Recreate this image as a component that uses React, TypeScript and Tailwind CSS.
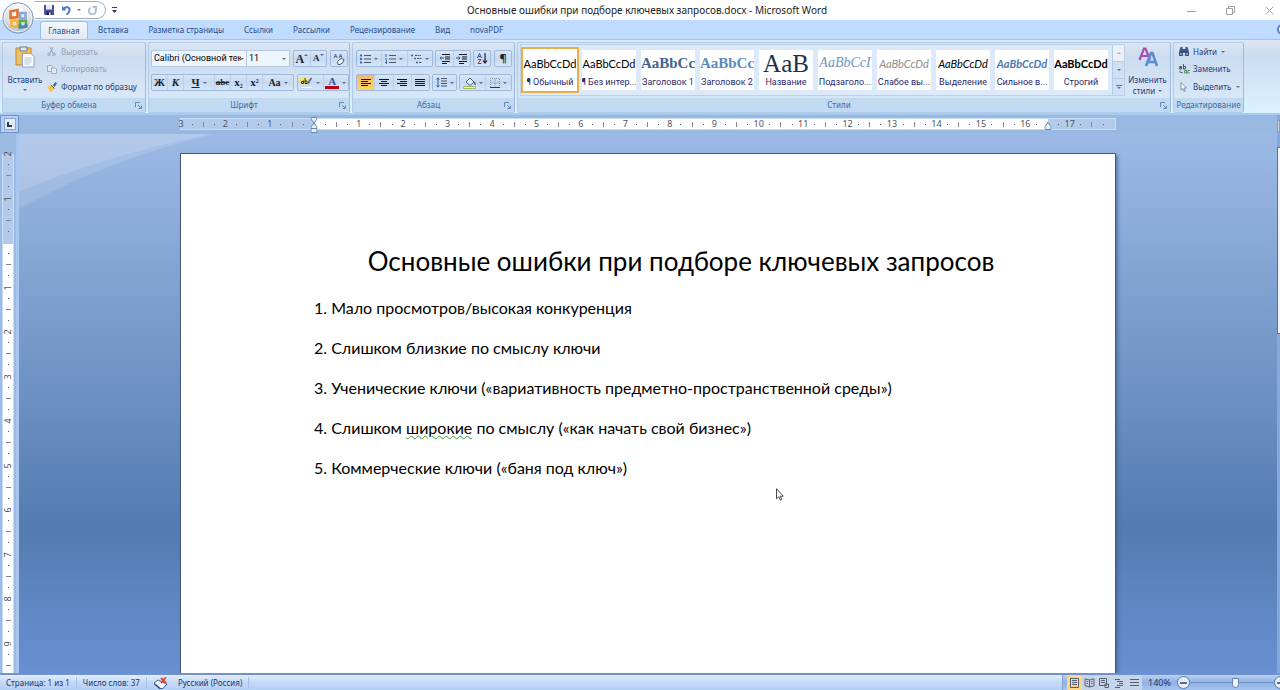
import type { ReactNode } from "react";
import clsx from "clsx";

const tabs = ["Вставка", "Разметка страницы", "Ссылки", "Рассылки", "Рецензирование", "Вид", "novaPDF"];

const styleTiles = [
    { sample: "AaBbCcDd", name: "¶ Обычный", look: "font-['Lato',sans-serif] text-[11px] text-black" },
    { sample: "AaBbCcDd", name: "¶ Без интер...", look: "font-['Lato',sans-serif] text-[11px] text-black" },
    { sample: "AaBbCc", name: "Заголовок 1", look: "font-['Liberation_Serif',serif] text-[15px] font-bold text-[#41648f]" },
    { sample: "AaBbCc", name: "Заголовок 2", look: "font-['Liberation_Serif',serif] text-[15px] font-bold text-[#5b8ac4]" },
    { sample: "AaB", name: "Название", look: "font-['Liberation_Serif',serif] text-[25px] text-[#1d3050]" },
    { sample: "AaBbCcI", name: "Подзаголо...", look: "font-['Liberation_Serif',serif] text-[14px] italic text-[#6d95c6]" },
    { sample: "AaBbCcDd", name: "Слабое вы...", look: "font-['Lato',sans-serif] text-[11px] italic text-[#8c8c8c]" },
    { sample: "AaBbCcDd", name: "Выделение", look: "font-['Lato',sans-serif] text-[11px] italic text-black" },
    { sample: "AaBbCcDd", name: "Сильное в...", look: "font-['Lato',sans-serif] text-[11px] font-bold italic text-[#4a78b5]" },
    { sample: "AaBbCcDd", name: "Строгий", look: "font-['Lato',sans-serif] text-[11px] font-bold text-black" },
];

const Caret = ({ className }: { className?: string }) => (
    <svg viewBox="0 0 4 2" className={clsx("h-[2px] w-1 shrink-0 fill-[#5a6f96]", className)}>
        <path d="M0 0h4L2 2z" />
    </svg>
);

const Group = ({ label, launcher, className, children }: { label: string; launcher?: boolean; className?: string; children: ReactNode }) => (
    <section className={clsx("flex flex-col rounded-[2px] border border-[#b3cbe8] border-r-[#9dbbe0] bg-linear-to-b from-[#dde7f3] via-[#cbdcf0] via-20% to-[#dcebfa]", className)}>
        <div className="flex min-h-0 flex-1">{children}</div>
        <div className="flex h-[14px] items-center bg-[#c1d9f1] text-[#3e6aaa]">
            <h2 className="flex-1 text-center">{label}</h2>
            {launcher && (
                <button aria-label={label} className="mr-[3px]">
                    <svg viewBox="0 0 7 7" className="size-[7px] fill-none stroke-[#6688b5]">
                        <path d="M.5 5V.5H5M3 3l3 3M6.5 3.500v3h-3" />
                    </svg>
                </button>
            )}
        </div>
    </section>
);

const Cluster = ({ children, className }: { children: ReactNode; className?: string }) => (
    <div className={clsx("flex h-[17px] items-stretch divide-x divide-[#b9cfea] rounded-[2px] border border-[#9db9dd] bg-linear-to-b from-[#d8e5f5] via-[#c6d9f0] to-[#d6e6f8]", className)}>
        {children}
    </div>
);

const Tool = ({ label, caret, active, className, children }: { label: string; caret?: boolean; active?: boolean; className?: string; children: ReactNode }) => (
    <button
        aria-label={label}
        className={clsx("flex flex-1 items-center justify-center gap-[3px] text-[#1b2433]", active && "bg-linear-to-b from-[#f9b56a] to-[#fdd65f]", className)}
    >
        {children}
        {caret && <Caret />}
    </button>
);

const Lines = ({ align }: { align: "left" | "center" | "right" | "full" }) => {
    const short = { left: "M0 3.500h7M0 7.500h7", center: "M2 3.500h6M2 7.500h6", right: "M3 3.500h7M3 7.500h7", full: "M0 3.500h10M0 7.500h10" }[align];
    return (
        <svg viewBox="0 0 10 9" className="h-[9px] w-[10px] fill-none stroke-[#10151d]">
            <path d={"M0 1.500h10M0 5.500h10" + short} />
        </svg>
    );
};

const ListIcon = ({ kind }: { kind: "bullets" | "numbers" | "levels" }) => (
    <svg viewBox="0 0 11 10" className="h-[10px] w-[11px] fill-none">
        {kind === "levels" ? (
            <>
                <path d="M0 1.500h2M3 4.500h2M5 8.500h2" stroke="#3c66a8" strokeWidth="1.500" />
                <path d="M4 1.500h6M6 4.500h5M8 8.500h3" stroke="#4a5568" strokeDasharray="2 .6" />
            </>
        ) : (
            <>
                <path d={kind === "bullets" ? "M0 1.500h2M0 5h2M0 8.500h2" : "M1 0v3M0 5h2M0 8.500h2M1.500 6v4"} stroke="#3c66a8" strokeWidth={kind === "bullets" ? 2 : 1} />
                <path d="M4 1.500h7M4 5h7M4 8.500h7" stroke="#4a5568" />
            </>
        )}
    </svg>
);

const IndentIcon = ({ flip }: { flip?: boolean }) => (
    <svg viewBox="0 0 11 10" className="h-[10px] w-[11px] fill-none stroke-[#10151d]">
        <path d="M3 .5h8M6 3h5M6 5h5M3 7.500h8M3 9.500h5" />
        <path d={flip ? "M0 4h4M2.500 2.500L4 4 2.500 5.500" : "M1 4h4M2.500 2.500L1 4l1.500 1.500"} stroke="#2d5aa8" />
    </svg>
);

const OfficeButton = () => (
    <button aria-label="Office" className="absolute top-[2px] left-[2px] z-10 size-8 rounded-full">
        <svg viewBox="0 0 32 32" className="size-8">
            <defs>
                <radialGradient id="orb" cx=".5" cy=".3" r=".7">
                    <stop offset="0" stopColor="#fff" />
                    <stop offset=".6" stopColor="#dfe3ea" />
                    <stop offset="1" stopColor="#aab6c8" />
                </radialGradient>
            </defs>
            <circle cx="16" cy="16" r="15.200" fill="url(#orb)" stroke="#8a9ab4" />
            <circle cx="16" cy="16" r="13.800" fill="none" stroke="#fff" strokeOpacity=".8" />
            <g fill="none" strokeWidth="2.600">
                <path d="M8.500 9.500l7-1.500v7l-7 1z" stroke="#e5702a" />
                <path d="M18 11h5.500v5.500H18z" stroke="#86a9d6" />
                <path d="M9.500 18.500h6V25l-6-1z" stroke="#f2b42c" />
                <path d="M18 19h6v5.500l-6 .8z" stroke="#6aa84a" />
                <path d="M18 22v3.300l6-.8V22" stroke="#3f86b8" />
            </g>
        </svg>
    </button>
);

const TitleBar = () => (
    <header className="flex h-5 items-center bg-white">
        <div className="flex flex-1 items-center">
            <div className="ml-[34px] flex h-[18px] w-[72px] items-center gap-[7px] rounded-r-full border border-[#a3a9b5] border-l-white pl-[9px]">
                <button aria-label="Сохранить">
                    <svg viewBox="0 0 10 10" className="size-[10px]">
                        <path d="M0 0h10v10H1L0 9z" fill="#4a4fa8" />
                        <path d="M2 0h6v4.500H2z" fill="#e8ecf8" />
                        <path d="M2.500 6.500h5V10h-5z" fill="#20244f" />
                        <path d="M5 7.200h1.500V10H5z" fill="#fff" />
                    </svg>
                </button>
                <button aria-label="Отменить" className="flex items-center gap-[6px]">
                    <svg viewBox="0 0 10 10" className="size-[10px] fill-none stroke-[#4a78cc]" strokeWidth="2">
                        <path d="M2 4c3-3 7-2 6.500 1.500C8.300 7.500 7 8.500 5.500 9.500" />
                        <path d="M1 1v4.500h4.500z" fill="#4a78cc" stroke="none" />
                    </svg>
                    <Caret />
                </button>
                <button aria-label="Повторить">
                    <svg viewBox="0 0 10 10" className="size-[9px] fill-none stroke-[#a7b8d4]" strokeWidth="1.800">
                        <path d="M3 1.800A4 4 0 1 0 8 3M5 1h4v3.500" />
                    </svg>
                </button>
            </div>
            <button aria-label="Настройка панели" className="ml-[6px]">
                <svg viewBox="0 0 5 6" className="h-[6px] w-[5px] fill-[#2e3d66]">
                    <path d="M0 0h5v1H0zM0 3h5L2.500 6z" />
                </svg>
            </button>
        </div>
        <h1 className="pl-5 text-[10px] text-[#222]">Основные ошибки при подборе ключевых запросов.docx - Microsoft Word</h1>
        <div className="flex flex-1 items-center justify-end gap-[30px] pr-[6px]">
            {[
                ["Свернуть", "M0 5.500h9"],
                ["Развернуть", "M.5 2.500h6v6h-6zM2.500 2V.5h6v6H7"],
                ["Закрыть", "M.5.500l8 8M8.500.500l-8 8"],
            ].map(([label, d]) => (
                <button key={label} aria-label={label}>
                    <svg viewBox="0 0 9 9" className="size-[9px] fill-none stroke-[#a0a0a0]">
                        <path d={d} />
                    </svg>
                </button>
            ))}
        </div>
    </header>
);

const TabBar = () => (
    <nav className="flex h-5 items-end overflow-hidden border-b border-[#a3c3ea] bg-[#bfdbff] pl-10 text-[#2b4c86]">
        <a href="#home" className="flex h-[18px] w-12 items-center justify-center rounded-t-[3px] border border-b-0 border-[#9dbfe8] bg-linear-to-b from-[#f4f8fd] to-[#dfe9f5]">Главная</a>
        {tabs.map((tab) => (
            <a key={tab} href={"#" + tab} className="flex h-[18px] items-center px-[10px] whitespace-nowrap">{tab}</a>
        ))}
        <button aria-label="Справка" className="-mr-[8px] mb-[4px] ml-auto size-[11px] shrink-0 rounded-full border-2 border-[#5b83c4] bg-white" />
    </nav>
);

const ClipboardGroup = () => (
    <Group label="Буфер обмена" launcher className="w-36">
        <button className="flex w-11 flex-col items-center pt-[3px] text-[#23407a]">
            <svg viewBox="0 0 20 22" className="h-[22px] w-5">
                <path d="M1 2h15v17H1z" fill="#ecc063" stroke="#b98a35" />
                <path d="M5 1h7v4H5z" fill="#dfe3ea" stroke="#6f7d92" />
                <path d="M7.500 7.500H16l3 3V21H7.500z" fill="#fdfdff" stroke="#8fa0bf" />
                <path d="M9.500 12h7M9.500 14h7M9.500 16h7M9.500 18h5" stroke="#9fb2d4" strokeWidth=".8" />
            </svg>
            <span className="mt-[6px] leading-3">Вставить</span>
            <Caret className="mt-[3px]" />
        </button>
        <div className="flex flex-1 flex-col text-[#23407a]">
            <button className="flex h-[17px] items-center gap-[5px] text-[#93a0b4]">
                <svg viewBox="0 0 9 9" className="size-[9px] fill-none stroke-[#94a2b8]">
                    <path d="M3 0l3 6M6 0L3 6" />
                    <circle cx="2" cy="7.300" r="1.200" />
                    <circle cx="7" cy="7.300" r="1.200" />
                </svg>
                Вырезать
            </button>
            <button className="flex h-[18px] items-center gap-[4px] text-[#93a0b4]">
                <svg viewBox="0 0 10 9" className="h-[9px] w-[10px] fill-[#e2e9f3] stroke-[#9aabc4]">
                    <path d="M.5.500h4l1 1v5h-5z" />
                    <path d="M4.500 3h4l1 1v4.500h-5z" />
                </svg>
                Копировать
            </button>
            <button className="flex h-[17px] items-center gap-[4px] whitespace-nowrap">
                <svg viewBox="0 0 10 10" className="size-[10px]">
                    <path d="M6 3l2.500-3L10 1.500 7.500 5z" fill="#4a5f96" />
                    <path d="M0 5l4-2 3.500 3.500L4 10z" fill="#f3c54a" />
                    <path d="M4 3l3.500 3.500" stroke="#7a5a20" />
                </svg>
                Формат по образцу
            </button>
        </div>
    </Group>
);

const FontGroup = () => (
    <Group label="Шрифт" launcher className="w-[202px]">
        <div className="flex flex-1 flex-col gap-[7px] px-[2px] pt-[7px]">
            <div className="flex h-[17px] items-stretch font-['Roboto',sans-serif] text-[9px]">
                <label className="relative flex w-24 items-center border border-[#b3c9e6] bg-[#eff5fd]">
                    <select aria-label="Шрифт" className="w-[89px] appearance-none overflow-hidden pl-[2px] text-black">
                        <option>Calibri (Основной тек</option>
                    </select>
                    <Caret className="absolute right-[2px]" />
                </label>
                <label className="relative flex w-[43px] items-center border border-l-0 border-[#b3c9e6] bg-[#eff5fd]">
                    <select aria-label="Размер" className="w-8 appearance-none pl-[2px] text-black">
                        <option>11</option>
                    </select>
                    <Caret className="absolute right-[3px]" />
                </label>
                <Cluster className="ml-[3px] w-[34px] font-['Liberation_Serif',serif] font-bold">
                    <Tool label="Увеличить размер"><span className="text-[12px] leading-none">A</span><Caret className="mb-[8px] -ml-[3px] rotate-180" /></Tool>
                    <Tool label="Уменьшить размер"><span className="text-[9px] leading-none">A</span><Caret className="mb-[8px] -ml-[3px]" /></Tool>
                </Cluster>
                <Cluster className="ml-[3px] w-[18px]">
                    <Tool label="Очистить формат">
                        <svg viewBox="0 0 12 12" className="size-3 fill-none stroke-[#44597f]">
                            <path d="M1 5l1.500-4L4 5M1.500 3.500h2M6 5l1.500-4L9 5M6.500 3.500h2" strokeWidth=".8" />
                            <path d="M4.500 8.500L8 5.500l3 1-1 3L7 11.500H5z" fill="#fff" />
                        </svg>
                    </Tool>
                </Cluster>
            </div>
            <div className="flex">
                <Cluster className="w-[143px] font-['Liberation_Serif',serif] text-[11px] font-bold">
                    <Tool label="Полужирный">Ж</Tool>
                    <Tool label="Курсив" className="italic">К</Tool>
                    <Tool label="Подчеркнутый" caret className="flex-2"><span className="underline">Ч</span></Tool>
                    <Tool label="Зачеркнутый"><span className="text-[9px] line-through">abc</span></Tool>
                    <Tool label="Подстрочный"><span>x<sub className="text-[6px]">2</sub></span></Tool>
                    <Tool label="Надстрочный"><span>x<sup className="text-[6px]">2</sup></span></Tool>
                    <Tool label="Регистр" caret className="flex-2"><span className="text-[10px]">Aa</span></Tool>
                </Cluster>
                <Cluster className="ml-[3px] w-[52px]">
                    <Tool label="Цвет выделения" caret>
                        <svg viewBox="0 0 13 12" className="h-3 w-[13px]">
                            <path d="M0 1h8v6H0z" fill="#f4ec5e" />
                            <path d="M3.500 3.500v3h-2v-2h2M5 1v5.500h2V4H5" fill="none" stroke="#222" strokeWidth=".9" />
                            <path d="M11.500 1L7.500 7" stroke="#667" strokeWidth="1.600" />
                            <path d="M.5 9.500h12v2H.5z" fill="#fff" stroke="#b8c4d8" strokeWidth=".5" />
                        </svg>
                    </Tool>
                    <Tool label="Цвет текста" caret>
                        <span className="border-b-[3px] border-[#c00012] px-[3px] font-['Liberation_Serif',serif] text-[11px] leading-[9px] font-bold text-[#2f5597]">A</span>
                    </Tool>
                </Cluster>
            </div>
        </div>
    </Group>
);

const ParagraphGroup = () => (
    <Group label="Абзац" launcher className="w-[163px]">
        <div className="flex flex-1 flex-col gap-[7px] px-[3px] pt-[7px]">
            <div className="flex">
                <Cluster className="w-[77px]">
                    <Tool label="Маркеры" caret><ListIcon kind="bullets" /></Tool>
                    <Tool label="Нумерация" caret><ListIcon kind="numbers" /></Tool>
                    <Tool label="Многоуровневый список" caret><ListIcon kind="levels" /></Tool>
                </Cluster>
                <Cluster className="ml-[2px] w-9">
                    <Tool label="Уменьшить отступ"><IndentIcon /></Tool>
                    <Tool label="Увеличить отступ"><IndentIcon flip /></Tool>
                </Cluster>
                <Cluster className="ml-[2px] w-[18px]">
                    <Tool label="Сортировка">
                        <svg viewBox="0 0 11 11" className="size-[11px] fill-none">
                            <path d="M.5 5l2-4.500L4.500 5M1.200 3.500h2.600" stroke="#2d5aa8" />
                            <path d="M1 6.500h3L1 10.500h3.500" stroke="#a33a3a" />
                            <path d="M8 0v10M6 7.500L8 10l2-2.500" stroke="#222" strokeWidth="1.200" />
                        </svg>
                    </Tool>
                </Cluster>
                <Cluster className="ml-[3px] w-[18px]">
                    <Tool label="Отобразить все знаки"><span className="text-[11px] font-bold">¶</span></Tool>
                </Cluster>
            </div>
            <div className="flex">
                <Cluster className="w-[74px]">
                    <Tool label="По левому краю" active><Lines align="left" /></Tool>
                    <Tool label="По центру"><Lines align="center" /></Tool>
                    <Tool label="По правому краю"><Lines align="right" /></Tool>
                    <Tool label="По ширине"><Lines align="full" /></Tool>
                </Cluster>
                <Cluster className="ml-[2px] w-[25px]">
                    <Tool label="Интервал" caret>
                        <svg viewBox="0 0 11 11" className="size-[11px] fill-none">
                            <path d="M2 1v9M.5 2.500L2 .8l1.500 1.700M.5 8.500L2 10.200l1.500-1.700" stroke="#2d5aa8" />
                            <path d="M5 1.500h6M5 4h6M5 6.500h6M5 9h6" stroke="#4a5568" />
                        </svg>
                    </Tool>
                </Cluster>
                <Cluster className="ml-[2px] w-[53px]">
                    <Tool label="Заливка" caret>
                        <svg viewBox="0 0 13 12" className="h-3 w-[13px]">
                            <path d="M3 5l4-4 4 4-4 3.500z" fill="#e7edf6" stroke="#48618f" />
                            <path d="M10.500 5c2 1 1.500 3 1.500 3" fill="none" stroke="#3c66a8" strokeWidth="1.400" />
                            <path d="M.5 9.500h12v2H.5z" fill="#fffbe0" stroke="#8fb040" strokeWidth=".8" />
                        </svg>
                    </Tool>
                    <Tool label="Границы" caret>
                        <svg viewBox="0 0 10 10" className="size-[10px] fill-none stroke-[#7f90ad]">
                            <path d="M.5 9V.500h9V9M5 .5V9M.5 5h9" strokeDasharray="1 1" />
                            <path d="M0 9.500h10" stroke="#2a3550" />
                        </svg>
                    </Tool>
                </Cluster>
            </div>
        </div>
    </Group>
);

const StylesGroup = () => (
    <Group label="Стили" launcher className="min-w-0 flex-1">
        <div className="mt-px ml-[2px] flex h-[52px] min-w-0 flex-1 border border-[#bcd0ea] bg-[#dce9f9]">
            <div className="flex min-w-0 flex-1 items-center gap-[5px] overflow-hidden">
                {styleTiles.map((tile, i) => (
                    <button
                        key={tile.name}
                        className={clsx(
                            "flex min-w-0 flex-1 flex-col items-center overflow-hidden bg-white",
                            i === 0 ? "-mr-[2px] h-[46px] border-2 border-[#e9b04a] py-[1px]" : "h-10"
                        )}
                    >
                        <span className={clsx("flex h-[26px] w-full items-center justify-center overflow-hidden leading-none whitespace-nowrap", tile.look)}>{tile.sample}</span>
                        <span className="h-3 font-['Roboto',sans-serif] text-[9px] leading-3 whitespace-nowrap text-[#2a2a6a]">{tile.name}</span>
                    </button>
                ))}
            </div>
            <div className="ml-[4px] flex w-3 flex-col divide-y divide-[#b4cbe8] border-l border-[#b4cbe8] bg-[#cfe0f5]">
                <button aria-label="Вверх" className="flex flex-1 items-center justify-center bg-[#ecf0f5]"><Caret className="rotate-180 opacity-50" /></button>
                <button aria-label="Вниз" className="flex flex-1 items-center justify-center"><Caret /></button>
                <button aria-label="Все стили" className="flex flex-1 flex-col items-center justify-center gap-[1px]"><span className="h-px w-[6px] bg-[#5a6f96]" /><Caret /></button>
            </div>
        </div>
        <button className="flex w-[45px] flex-col items-center pt-[4px] text-[#23407a]">
            <svg viewBox="0 0 20 20" className="size-5 fill-none">
                <path d="M1.500 13L6 1.500h1.500L12 13M3.500 9h6" stroke="#a94fb0" strokeWidth="2.200" />
                <path d="M8 19l5-13h1.500L19 19M10 15h7" stroke="#5b8bd2" strokeWidth="2.600" />
            </svg>
            <span className="mt-[7px] leading-[11px]">Изменить</span>
            <span className="flex items-center gap-[3px] leading-[11px]">стили <Caret /></span>
        </button>
    </Group>
);

const EditingGroup = () => (
    <Group label="Редактирование" className="w-[71px] whitespace-nowrap">
        <div className="flex flex-1 flex-col pl-[5px] text-[#23407a]">
            <button className="flex h-[17px] items-center gap-[4px]">
                <svg viewBox="0 0 10 9" className="h-[9px] w-[10px] fill-[#3d5484]">
                    <path d="M1.500 0h2v2h3V0h2l1.500 5v4H6V6H4v3H0V5z" />
                    <path d="M1.500 6h1v2h-1zM7.500 6h1v2h-1z" fill="#dbe6f5" />
                </svg>
                Найти <Caret />
            </button>
            <button className="flex h-[18px] items-center gap-[3px]">
                <svg viewBox="0 0 11 10" className="h-[10px] w-[11px] fill-none">
                    <path d="M.5 2.500h2V5h-2V3.500h2M4.500 0v5h2V2.500h-2" stroke="#3d5484" />
                    <path d="M1 6.500v2h3" stroke="#6a7a98" />
                    <path d="M7.500 6.500h-2V9h2V6.500V9.500M10.800 6.500h-2V9h2" stroke="#5b8f5a" />
                </svg>
                Заменить
            </button>
            <button className="flex h-[17px] items-center gap-[5px]">
                <svg viewBox="0 0 9 10" className="h-[10px] w-[9px] fill-white stroke-[#6d7c96]" strokeWidth=".8">
                    <path d="M2 .5v7.500l1.800-1.500L5 9.500l1.200-.5L5 6h2.500z" />
                </svg>
                Выделить <Caret />
            </button>
        </div>
    </Group>
);

// One mark for every quarter of a centimetre, spread from edge to edge.
const RulerMarks = ({ origin, count, vertical }: { origin: number; count: number; vertical?: boolean }) => (
    <>
        {Array.from({ length: count * 4 + 1 }, (_, i) => {
            const cm = Math.abs(i / 4 - origin);
            return (
                <span key={i} className={clsx("flex items-center justify-center", vertical ? "h-0 -rotate-90" : "w-0", i === count * 4 && "invisible")}>
                    {i % 4 === 0 ? cm || "" : i % 4 === 2 ? <i className="h-[5px] w-px shrink-0 bg-[#7d8694]" /> : <i className="size-px shrink-0 bg-[#4f5866]" />}
                </span>
            );
        })}
    </>
);

const Ruler = () => (
    <div className="flex h-[19px] bg-[#9ab9e2]">
        <button aria-label="Табуляция" className="flex h-[18px] w-[19px] items-center justify-center border border-[#7292cc] bg-[#b5cdef]">
            <span className="flex size-3 items-center justify-center border border-[#8aa6d4] bg-[#e3ecf9]">
                <i className="size-[5px] border-b-2 border-l-2 border-[#2d3950]" />
            </span>
        </button>
        <div className="flex min-w-0 flex-1 justify-center">
            <div className="relative mt-[3px] flex h-3 w-full max-w-[936px] items-center justify-between border border-[#c9dcf4] bg-[linear-gradient(to_right,#b3cbeb_14.3%,#fff_14.3%,#fff_92.8%,#b3cbeb_92.8%)] text-[9px] text-[#4e5560]">
                <RulerMarks origin={3} count={21} />
                <svg viewBox="0 0 7 16" className="absolute -top-[2px] left-[14.2%] h-4 w-[7px] -translate-x-1/2 fill-[#e6eefa] stroke-[#6c86b4]">
                    <path d="M.5.500h6v1.500l-3 4-3-4zM3.500 6l3 4v1.500h-6V10zM.5 11.500h6v4h-6z" />
                </svg>
                <svg viewBox="0 0 7 8" className="absolute top-[3px] left-[92.8%] h-2 w-[7px] -translate-x-1/2 fill-[#e6eefa] stroke-[#6c86b4]">
                    <path d="M3.500.500l3 4v3h-6v-3z" />
                </svg>
            </div>
        </div>
    </div>
);

const Document = () => (
    <div className="flex min-h-0 flex-1">
        <div className="flex w-[19px] flex-col items-center overflow-hidden border-r-[3px] border-[#a9c6ee] bg-[#9cbbe4] pt-5">
            <div className="flex h-[534px] w-3 shrink-0 flex-col items-stretch justify-between border-x border-[#c9dcf4] bg-[linear-gradient(#b3cbeb_16.9%,#fff_16.9%)] text-[9px] text-[#4e5560]">
                <RulerMarks origin={2} count={12} vertical />
            </div>
        </div>
        <main className="relative min-w-0 flex-1 overflow-hidden bg-linear-to-b from-[#9dbae6] via-[#547cb0] via-73% to-[#6890d2] pt-[19px] font-['Lato','Noto_Sans',sans-serif] text-[16px] leading-5 text-black">
            <svg viewBox="0 0 200 76" className="absolute top-0 left-0 h-[76px] w-[200px]">
                <path d="M0 0h196C120 18 60 42 0 75z" fill="#fff" fillOpacity=".12" />
                <path d="M0 0h190C120 16 60 32 0 58z" fill="#fff" fillOpacity=".13" />
            </svg>
            <article className="relative mx-auto h-full w-full max-w-[936px] border border-b-0 border-[#46597a] bg-white pt-[91px] pr-[67px] pl-[133px] shadow-[2px_2px_3px_#3f5f8fb0]">
                <h2 className="mb-[21px] text-center text-[26px] leading-8">Основные ошибки при подборе ключевых запросов</h2>
                <ol className="flex flex-col gap-5">
                    <li>1. Мало просмотров/высокая конкуренция</li>
                    <li>2. Слишком близкие по смыслу ключи</li>
                    <li>3. Ученические ключи («вариативность предметно-пространственной среды»)</li>
                    <li>4. Слишком <span className="underline decoration-[#3f9b3f] decoration-wavy decoration-1 underline-offset-1">широкие</span> по смыслу («как начать свой бизнес»)</li>
                    <li>5. Коммерческие ключи («баня под ключ»)</li>
                </ol>
                <svg viewBox="0 0 8 13" className="absolute top-[334px] left-[595px] h-[13px] w-2 fill-white stroke-[#333]" strokeWidth=".9">
                    <path d="M.5.700v10l2.300-2 1.500 3.500 1.500-.7-1.500-3.300h3z" />
                </svg>
            </article>
        </main>
    </div>
);

const viewIcons = [
    ["Разметка страницы", "M1.500.500h8v9h-8zM3 2.500h5M3 4.500h5M3 6.500h5"],
    ["Режим чтения", "M5.500 2v7M5.500 2L1 .8v7L5.500 9 10 7.800v-7zM2.500 3.500h1.500M2.500 5.500h1.500M7 3.500h1.500M7 5.500h1.500"],
    ["Веб-документ", "M.5.500h7v7h-7zM2 2.500h4M2 4.500h4M6 6h3.500v3.500H6z"],
    ["Структура", "M1 1.500h5M3 3.500h6M5 5.500h4M3 7.500h6M1 9.500h5"],
    ["Черновик", "M1 1.500h9M1 4.500h9M1 7.500h9"],
];

const StatusBar = () => (
    <footer className="flex h-[17px] items-center overflow-hidden border-t-2 border-t-[#6d92cc] bg-linear-to-b from-[#e2edfc] via-[#c3d9f8] to-[#b4cff5] whitespace-nowrap text-[#1f3566]">
        <span className="border-r border-[#a4c0e8] px-[6px]">Страница: 1 из 1</span>
        <span className="border-r border-[#a4c0e8] px-[6px]">Число слов: 37</span>
        <button aria-label="Правописание" className="mr-1 ml-[7px]">
            <svg viewBox="0 0 14 12" className="h-3 w-[14px]">
                <path d="M0 6l4-3 9 4-4 4.500H6z" fill="#f4f7fc" stroke="#44649c" />
                <path d="M6 11.500L.5 7" stroke="#2c4a86" strokeWidth="1.500" />
                <path d="M7 1l5 5M12 0L7 6" stroke="#e0452c" strokeWidth="1.800" />
            </svg>
        </button>
        <span className="border-r border-[#a4c0e8] px-[6px]">Русский (Россия)</span>
        <div className="ml-auto flex h-full shrink-0 items-center border-l border-[#7f9fd0] bg-linear-to-b from-[#b9d0f2] via-[#8fb1e2] to-[#a5c4f0] pl-[4px]">
            {viewIcons.map(([label, d], i) => (
                <button key={label} aria-label={label} className={clsx("flex h-full w-[15px] items-center justify-center", i === 0 ? "bg-[#fbd68a]" : "bg-[#c6d5ea]")}>
                    <svg viewBox="0 0 11 10" className="h-[10px] w-[11px] fill-none stroke-[#56606f]"><path d={d} /></svg>
                </button>
            ))}
            <span className="mx-[6px] text-[9px]">140%</span>
            <button aria-label="Уменьшить" className="flex size-[13px] items-center justify-center rounded-full border border-[#5b79ad] bg-[#e6eefa]">
                <i className="h-[2px] w-[7px] bg-[#5c6d8c]" />
            </button>
            <input
                type="range"
                aria-label="Масштаб"
                min={0}
                max={100}
                defaultValue={54}
                className="h-[11px] w-[84px] appearance-none bg-[linear-gradient(#6f93c8,#6f93c8)] bg-size-[100%_1px] bg-center bg-no-repeat [&::-webkit-slider-thumb]:h-[10px] [&::-webkit-slider-thumb]:w-[7px] [&::-webkit-slider-thumb]:appearance-none [&::-webkit-slider-thumb]:rounded-b-full [&::-webkit-slider-thumb]:border [&::-webkit-slider-thumb]:border-[#6a82ac] [&::-webkit-slider-thumb]:bg-[#eef3fb]"
            />
            <button aria-label="Увеличить" className="-mr-[7px] flex size-[13px] shrink-0 items-center justify-center rounded-full border border-[#5b79ad] bg-[#e6eefa]">
                <i className="h-[2px] w-[7px] bg-[#5c6d8c]" />
            </button>
        </div>
    </footer>
);

export default function App() {
    return (
        <div className="relative flex h-screen flex-col overflow-hidden bg-[#bfdbff] font-['Noto_Sans',sans-serif] text-[8px]">
            <OfficeButton />
            <TitleBar />
            <TabBar />
            <div className="flex h-[75px] gap-[2px] border-b-2 border-[#a5cdf2] bg-linear-to-b from-[#dfe8f3] via-[#cbdcf0] via-20% to-[#dcf2ff] pt-[2px] pr-9 pl-[2px]">
                <ClipboardGroup />
                <FontGroup />
                <ParagraphGroup />
                <StylesGroup />
                <EditingGroup />
            </div>
            <div className="flex min-h-0 flex-1">
                <div className="flex min-w-0 flex-1 flex-col">
                    <Ruler />
                    <Document />
                </div>
                <div className="flex w-[3px] flex-col bg-[#86a8da] pt-[5px]">
                    <span className="h-3 border border-[#9a9a9a] bg-[#d3d6da]" />
                    <span className="mt-[15px] h-[187px] border border-r-0 border-[#5f6f88] bg-[#f2f4f7]" />
                </div>
            </div>
            <StatusBar />
        </div>
    );
}
